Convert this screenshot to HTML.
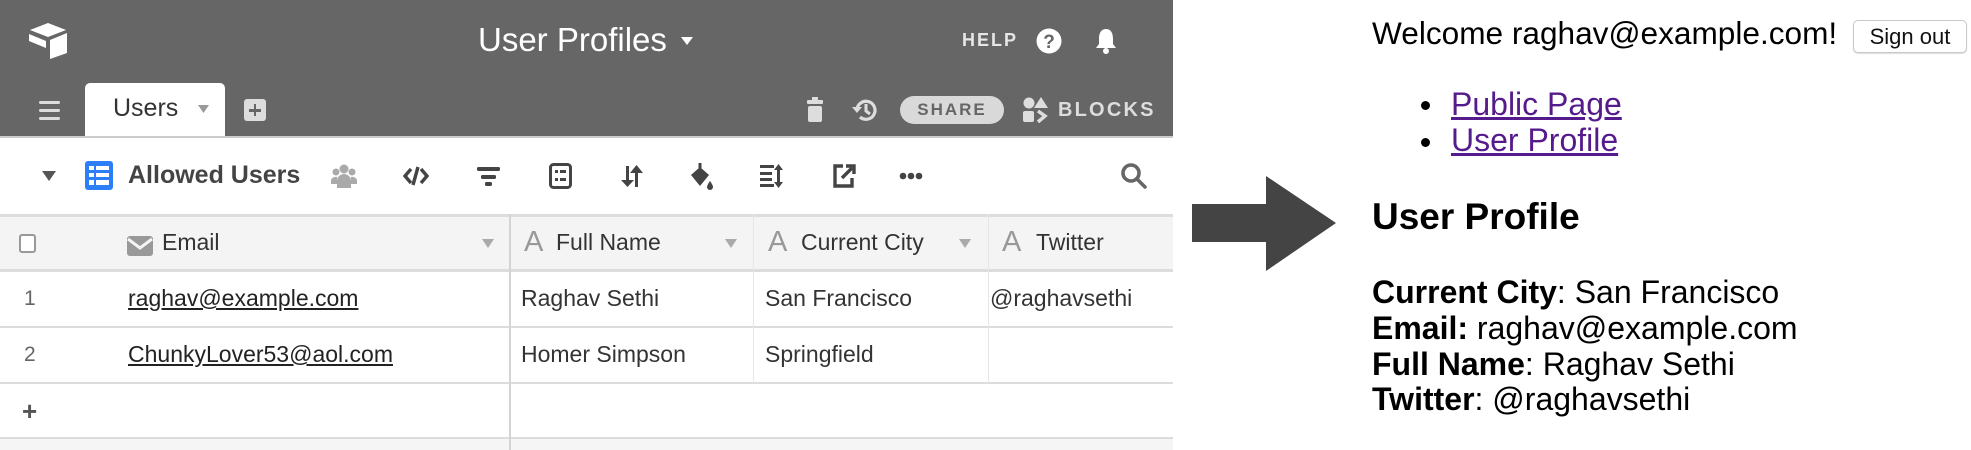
<!DOCTYPE html>
<html><head><meta charset="utf-8">
<style>
*{box-sizing:border-box;margin:0;padding:0}
body{width:1971px;height:450px;position:relative;background:#fff;font-family:"Liberation Sans",Arial,sans-serif;overflow:hidden}
.a{position:absolute}
.hdr{left:0;top:0;width:1173px;height:136px;background:#666}
.w{color:#fff}
.ic{position:absolute}
.cell{position:absolute;font-size:23px;color:#333;white-space:nowrap}
.hline{position:absolute;left:0;width:1173px;height:2px;background:#dcdcdc}
.r{position:absolute;font-size:32px;color:#000;white-space:nowrap;left:1372px}
</style></head><body>
<div class="a hdr"></div>
<svg class="ic" style="left:27px;top:22px" width="42" height="38" viewBox="0 0 42 38">
<path d="M21 1 L39 8 L21 15 L3 8 Z" fill="#fff"/>
<path d="M23 18 L40 11 L40 31 L23 37 Z" fill="#fff"/>
<path d="M2 12 L19 19 L19 26 L2 19 Z" fill="#fff"/>
</svg>
<div class="a w" style="left:478px;top:21px;font-size:33px;">User Profiles</div>
<svg class="ic" style="left:681px;top:37px" width="12" height="8"><path d="M0 0H12L6 8Z" fill="#fff"/></svg>
<div class="a" style="left:962px;top:30px;font-size:18px;color:#e6e6e6;letter-spacing:2px;font-weight:bold">HELP</div>
<svg class="ic" style="left:1036px;top:28px" width="26" height="26"><circle cx="13" cy="13" r="12.5" fill="#fff"/><text x="13" y="20" font-size="19" font-weight="bold" fill="#666" text-anchor="middle" font-family="Liberation Sans">?</text></svg>
<svg class="ic" style="left:1094px;top:27px" width="24" height="28"><path d="M12 2C6 2 5 8 5 12V17L2 21H22L19 17V12C19 8 18 2 12 2Z" fill="#fff"/><circle cx="12" cy="24" r="3" fill="#fff"/></svg>
<div class="a" style="left:39px;top:101px;width:21px;height:3px;background:#ddd;border-radius:2px"></div>
<div class="a" style="left:39px;top:109px;width:21px;height:3px;background:#ddd;border-radius:2px"></div>
<div class="a" style="left:39px;top:117px;width:21px;height:3px;background:#ddd;border-radius:2px"></div>
<div class="a" style="left:85px;top:83px;width:140px;height:55px;background:#fff;border-radius:5px 5px 0 0"></div>
<div class="a" style="left:113px;top:94px;font-size:25px;color:#333">Users</div>
<svg class="ic" style="left:198px;top:105px" width="11" height="8"><path d="M0 0H11L5.5 8Z" fill="#999"/></svg>
<div class="a" style="left:244px;top:99px;width:22px;height:22px;background:#ddd;border-radius:3px"></div>
<div class="a" style="left:249px;top:109px;width:12px;height:2.5px;background:#666"></div>
<div class="a" style="left:253.7px;top:104px;width:2.5px;height:12px;background:#666"></div>
<svg class="ic" style="left:806px;top:97px" width="18" height="26"><rect x="6" y="0" width="6" height="3" fill="#ddd"/><rect x="1" y="3" width="16" height="4" rx="1" fill="#ddd"/><rect x="2" y="9" width="14" height="16" rx="2" fill="#ddd"/></svg>
<svg class="ic" style="left:851px;top:97px" width="28" height="26"><path d="M6 13A9 9 0 1 1 9 20" stroke="#ddd" stroke-width="3.2" fill="none"/><path d="M1 10L6 16L11 10Z" fill="#ddd"/><path d="M15 7V14L19 17" stroke="#ddd" stroke-width="3" fill="none"/></svg>
<div class="a" style="left:900px;top:96px;width:104px;height:28px;background:#d9d9d9;border-radius:14px;font-size:17px;color:#666;letter-spacing:2px;font-weight:bold;text-align:center;line-height:28px">SHARE</div>
<svg class="ic" style="left:1023px;top:97px" width="26" height="26"><circle cx="6" cy="6" r="5.5" fill="#ddd"/><path d="M18 0L25 11H11Z" fill="#ddd"/><rect x="0" y="14" width="11" height="11" rx="2" fill="#ddd"/><path d="M15 14L22 19L15 25" stroke="#ddd" stroke-width="3.5" fill="none"/></svg>
<div class="a" style="left:1058px;top:99px;font-size:20px;color:#ddd;letter-spacing:2.2px;font-weight:bold">BLOCKS</div>
<div class="a" style="left:0;top:136px;width:1173px;height:2px;background:#ccc"></div>
<svg class="ic" style="left:42px;top:171px" width="14" height="10"><path d="M0 0H14L7 10Z" fill="#555"/></svg>
<svg class="ic" style="left:85px;top:161px" width="28" height="29"><rect width="28" height="29" rx="3" fill="#2d7ff9"/><g fill="#fff"><rect x="4" y="5" width="5" height="4"/><rect x="11" y="5" width="13" height="4"/><rect x="4" y="12" width="5" height="4"/><rect x="11" y="12" width="13" height="4"/><rect x="4" y="19" width="5" height="5"/><rect x="11" y="19" width="13" height="5"/></g></svg>
<div class="a" style="left:128px;top:161px;font-size:25px;font-weight:bold;color:#444">Allowed Users</div>
<svg class="ic" style="left:331px;top:164px" width="26" height="24" fill="#aaa"><circle cx="13" cy="5" r="4.5"/><circle cx="5" cy="8" r="3.5"/><circle cx="21" cy="8" r="3.5"/><path d="M6 24V17A7 7 0 0 1 20 17V24Z"/><path d="M0 20V16A5 4 0 0 1 6 13V20Z"/><path d="M26 20V16A5 4 0 0 0 20 13V20Z"/></svg>
<svg class="ic" style="left:403px;top:165px" width="26" height="22" fill="none" stroke="#444" stroke-width="3.4"><path d="M8 4L2 11L8 18"/><path d="M18 4L24 11L18 18"/><path d="M15 2L10 20"/></svg>
<svg class="ic" style="left:477px;top:166px" width="23" height="20" fill="#444"><rect x="0" y="1" width="23" height="4" rx="1.5"/><rect x="4" y="9" width="15" height="4" rx="1.5"/><rect x="8" y="16" width="7" height="4" rx="1.5"/></svg>
<svg class="ic" style="left:549px;top:163px" width="23" height="26"><rect x="1.5" y="1.5" width="20" height="23" rx="3" fill="none" stroke="#444" stroke-width="3"/><g fill="#444"><rect x="6" y="7" width="3" height="3"/><rect x="11" y="7" width="6" height="3"/><rect x="6" y="15" width="3" height="3"/><rect x="11" y="15" width="6" height="3"/></g></svg>
<svg class="ic" style="left:621px;top:164px" width="22" height="24" fill="#444"><rect x="5" y="2" width="3" height="16"/><path d="M0 16H13L6.5 23Z"/><rect x="14" y="7" width="3" height="16"/><path d="M9 9H22L15.5 1Z"/></svg>
<svg class="ic" style="left:688px;top:162px" width="26" height="28" fill="#444"><path d="M3 13L12 5L21 13L12 24Z"/><path d="M12 1L12 6" stroke="#444" stroke-width="3"/><path d="M22 19C22 19 25 23 25 25A3 3 0 0 1 19 25C19 23 22 19 22 19Z"/></svg>
<svg class="ic" style="left:760px;top:164px" width="24" height="24" fill="#444"><rect x="0" y="1" width="14" height="3"/><rect x="0" y="8" width="12" height="3"/><rect x="0" y="14" width="12" height="3"/><rect x="0" y="20" width="14" height="3"/><rect x="17" y="4" width="3" height="16"/><path d="M14 6H23L18.5 0Z"/><path d="M14 18H23L18.5 24Z"/></svg>
<svg class="ic" style="left:832px;top:163px" width="24" height="26" fill="none" stroke="#444" stroke-width="3.4"><path d="M11 3H3V23H20V15"/><path d="M10 15L20 5"/><path d="M14 3H22V11" /></svg>
<svg class="ic" style="left:899px;top:172px" width="24" height="8" fill="#444"><circle cx="4" cy="4" r="3.3"/><circle cx="12" cy="4" r="3.3"/><circle cx="20" cy="4" r="3.3"/></svg>
<svg class="ic" style="left:1120px;top:162px" width="28" height="28" fill="none" stroke="#666" stroke-width="3.6"><circle cx="11" cy="11" r="8"/><path d="M17 17L25 25" stroke-linecap="round"/></svg>
<div class="a" style="left:0;top:214px;width:1173px;height:56px;background:#f4f4f4;border-top:3px solid #ddd"></div>
<div class="hline" style="top:269px;height:3px"></div>
<div class="hline" style="top:326px"></div>
<div class="hline" style="top:382px"></div>
<div class="hline" style="top:437px"></div>
<div class="a" style="left:0;top:439px;width:1173px;height:11px;background:#f5f5f5"></div>
<div class="a" style="left:509px;top:214px;width:2px;height:236px;background:#d4d4d4"></div>
<div class="a" style="left:753px;top:214px;width:1px;height:169px;background:#e6e6e6"></div>
<div class="a" style="left:988px;top:214px;width:1px;height:169px;background:#e6e6e6"></div>
<div class="a" style="left:19px;top:234px;width:17px;height:19px;border:2px solid #999;border-radius:3px;background:#fff"></div>
<svg class="ic" style="left:127px;top:236px" width="26" height="20"><rect width="26" height="20" rx="3" fill="#999"/><path d="M1 3L13 12L25 3" stroke="#f4f4f4" stroke-width="3" fill="none"/></svg>
<div class="cell" style="left:162px;top:229px">Email</div>
<svg class="ic" style="left:482px;top:239px" width="12" height="9"><path d="M0 0H12L6 9Z" fill="#aaa"/></svg>
<div class="cell" style="left:524px;top:226px;font-size:29px;color:#999">A</div>
<div class="cell" style="left:556px;top:229px">Full Name</div>
<svg class="ic" style="left:725px;top:239px" width="12" height="9"><path d="M0 0H12L6 9Z" fill="#aaa"/></svg>
<div class="cell" style="left:768px;top:226px;font-size:29px;color:#999">A</div>
<div class="cell" style="left:801px;top:229px">Current City</div>
<svg class="ic" style="left:959px;top:239px" width="12" height="9"><path d="M0 0H12L6 9Z" fill="#aaa"/></svg>
<div class="cell" style="left:1002px;top:226px;font-size:29px;color:#999">A</div>
<div class="cell" style="left:1036px;top:229px">Twitter</div>
<div class="cell" style="left:24px;top:287px;color:#666;font-size:21px">1</div>
<div class="cell" style="left:128px;top:285px;text-decoration:underline;color:#222">raghav@example.com</div>
<div class="cell" style="left:521px;top:285px">Raghav Sethi</div>
<div class="cell" style="left:765px;top:285px">San Francisco</div>
<div class="cell" style="left:990px;top:285px">@raghavsethi</div>
<div class="cell" style="left:24px;top:343px;color:#666;font-size:21px">2</div>
<div class="cell" style="left:128px;top:341px;text-decoration:underline;color:#222">ChunkyLover53@aol.com</div>
<div class="cell" style="left:521px;top:341px">Homer Simpson</div>
<div class="cell" style="left:765px;top:341px">Springfield</div>
<div class="cell" style="left:22px;top:396px;font-size:26px;color:#555;font-weight:bold">+</div>
<svg class="ic" style="left:1192px;top:176px" width="144" height="95"><path d="M0 28H74V0L144 47L74 95V66H0Z" fill="#444"/></svg>
<div class="r" style="top:15px;font-size:31.6px">Welcome raghav@example.com!</div>
<div class="a" style="left:1853px;top:20px;width:114px;height:33px;border:1px solid #c8c8c8;border-radius:5px;background:#fff;font-size:22px;text-align:center;line-height:31px;color:#111;box-shadow:0 1px 1px #ddd">Sign out</div>
<div class="a" style="left:1421px;top:101px;width:9px;height:9px;border-radius:50%;background:#000"></div>
<div class="a" style="left:1421px;top:138px;width:9px;height:9px;border-radius:50%;background:#000"></div>
<div class="r" style="left:1451px;top:86px;color:#551a8b;text-decoration:underline">Public Page</div>
<div class="r" style="left:1451px;top:122px;color:#551a8b;text-decoration:underline">User Profile</div>
<div class="r" style="top:196px;font-size:37px;font-weight:bold">User Profile</div>
<div class="r" style="top:274px"><b>Current City</b>: San Francisco</div>
<div class="r" style="top:310px"><b>Email:</b> raghav@example.com</div>
<div class="r" style="top:346px"><b>Full Name</b>: Raghav Sethi</div>
<div class="r" style="top:381px"><b>Twitter</b>: @raghavsethi</div>
</body></html>
